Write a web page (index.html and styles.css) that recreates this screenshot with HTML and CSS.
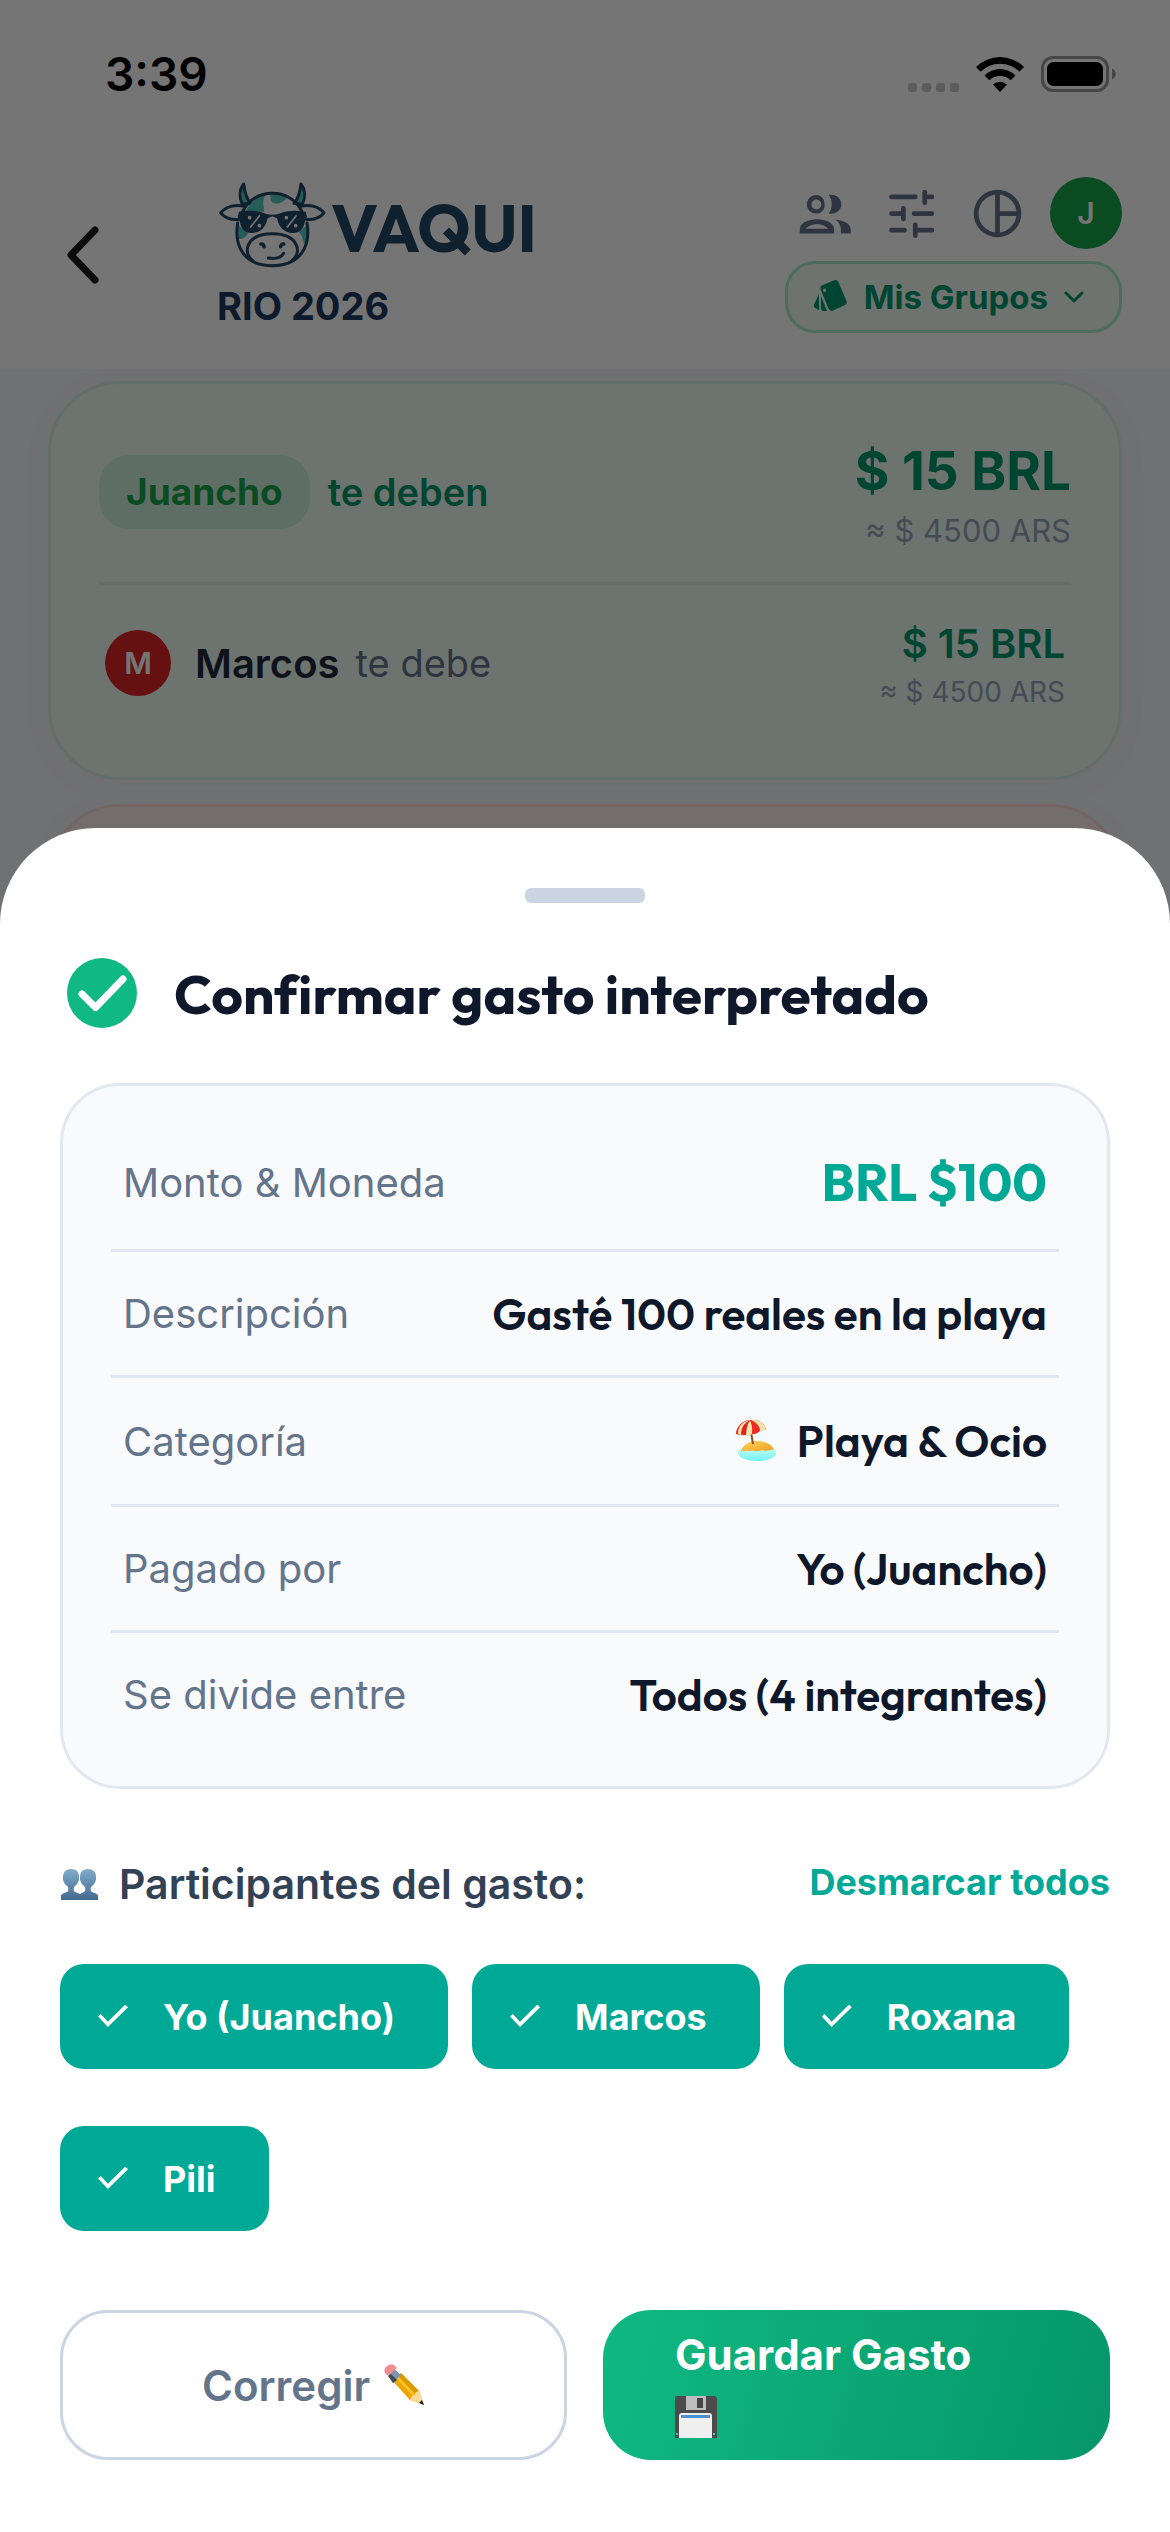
FILE: index.html
```html
<!DOCTYPE html>
<html lang="es">
<head>
<meta charset="utf-8">
<meta name="viewport" content="width=device-width, initial-scale=1">
<title>Vaqui – Confirmar gasto</title>
<link rel="stylesheet" href="styles.css">
</head>
<body>
<div class="screen">
  <div class="app">
    <div class="status">
      <span class="status-time">3:39</span>
      <div class="status-icons">
        <svg width="51" height="9" viewBox="0 0 51 9" fill="#c9c9c9" aria-hidden="true"><rect width="9" height="9" rx="2.5"/><rect x="14" width="9" height="9" rx="2.5"/><rect x="28" width="9" height="9" rx="2.5"/><rect x="42" width="9" height="9" rx="2.5"/></svg>
        <svg width="48" height="36" viewBox="0 0 48 36" aria-hidden="true"><path d="M0 11a34 34 0 0 1 48 0l-4.600 4.700a27.500 27.500 0 0 0-38.800 0z"/><path d="M8.500 19.500a22 22 0 0 1 31 0l-4.800 4.800a15.200 15.200 0 0 0-21.400 0z"/><path d="M17 28.500a10 10 0 0 1 14 0L24 36z"/></svg>
        <svg width="75" height="36" viewBox="0 0 75 36" aria-hidden="true"><rect x="1.500" y="1.500" width="65" height="33" rx="10.500" fill="none" stroke="#999" stroke-width="3"/><rect x="6" y="6" width="56" height="24" rx="6.500"/><path d="M71 12.500c5 2 5 9 0 11z" fill="#999"/></svg>
      </div>
    </div>

    <header class="header">
      <button class="back" aria-label="Volver"><svg width="34" height="58" viewBox="0 0 34 58" fill="none" stroke="#181c18" stroke-width="7" stroke-linecap="round" stroke-linejoin="round"><path d="M29 4 5 29l24 25"/></svg></button>
      <div class="brand">
        <div class="logo">
          <svg width="110" height="90" viewBox="54 47 330 270" fill="none" stroke="#214664" stroke-width="9" stroke-linecap="round" stroke-linejoin="round" role="img" aria-label="Vaca con anteojos">
            <path d="M155 117c-12-12-18-34-21-58-12 15-15 38-4 61z" fill="#53cac1"/>
            <path d="M285 117c12-12 18-34 21-58 12 15 15 38 4 61z" fill="#53cac1"/>
            <path d="M136 126c-28-8-57 2-71 20 14 16 34 22 57 19"/>
            <path d="M304 126c28-8 57 2 71 20-14 16-34 22-57 19"/>
            <path d="M140 140c18-30 34-44 60-48-14 24-4 34-4 50z" fill="#53cac1" stroke="none"/>
            <path d="M214 90c18-4 38 0 50 11-14 14-26 20-40 16-8-4-11-14-10-27z" fill="#53cac1" stroke="none"/>
            <path d="M116 178c8 14 26 20 32 28-6 10-14 20-32 18zM326 178c-8 12-22 18-26 28 12 2 8 26 20 36 8-20 10-44 6-64z" fill="#53cac1" stroke="none"/>
            <path d="M131 142c16-34 48-55 89-55s73 21 89 55M116 176c-12 72 22 128 104 128s116-56 104-128"/>
            <path d="M160 288c-28-20-22-80 60-80s88 60 60 80"/>
            <path d="M120 142q48-8 80 6 20 6 40 0 32-14 80-6l4 16q-4 3-6 10-4 38-36 38-38 0-48-44l-14-6-14 6q-10 44-48 44-32 0-36-38-2-7-6-10z" fill="#214664" stroke="none"/>
            <g stroke="#fff" stroke-width="5"><path d="m155 188 26-33M265 188l26-33"/><circle cx="152" cy="160" r="3"/><circle cx="181" cy="184" r="3"/><circle cx="262" cy="160" r="3"/><circle cx="290" cy="184" r="3"/></g>
            <path d="M186 239q8-1 9 8M254 239q-8-1-9 8" stroke-width="11"/>
            <path d="M208 281q34 6 46-14"/>
          </svg>
          <span class="logo-name">VAQUI</span>
        </div>
        <h1 class="group-name">RIO 2026</h1>
      </div>
      <div class="tools">
        <div class="tool-row">
          <button class="tool" aria-label="Miembros"><svg width="57" height="57" viewBox="0 0 24 24" fill="#64748b"><path d="M9 12c1.930 0 3.500-1.570 3.500-3.500C12.500 6 11.200 4.200 9 4.200S5 5.900 5 8.200 6.800 12 9 12zm0-5.900a2.100 2.100 0 1 1 0 4.200 2.100 2.100 0 0 1 0-4.200zM2 18.700v1.700h14.500v-1.700c0-2.900-3.800-4.300-7.250-4.300S2 15.800 2 18.700zm2.500-.3c.8-1 2.800-1.900 4.750-1.900s3.950.9 4.750 1.900zM14.200 12c3.100.5 5.300-1.400 5.300-3.900s-2.200-4.400-5.300-3.900c1.700 2.200 1.700 5.600 0 7.800zM17 14.500c1.700 1.200 2.300 2.600 2.300 4.200v1.700h4.200v-1.700c0-2.400-3-3.800-6.500-4.200z"/></svg></button>
          <button class="tool" aria-label="Ajustes"><svg width="57" height="57" viewBox="0 0 24 24" fill="none" stroke="#64748b" stroke-width="2" stroke-linecap="round"><path d="M4 5h10M18 5h3M18 3v4.500M4 12h4M9 9.800v4.500M13.500 12H21M4 19h5.500M14 16.800v4.500M14 19h7"/></svg></button>
          <button class="tool" aria-label="Estadísticas"><svg width="57" height="57" viewBox="0 0 24 24" fill="none" stroke="#64748b" stroke-width="2"><circle cx="12" cy="12" r="9"/><path d="M12 3v18M12 12h9"/></svg></button>
          <button class="avatar avatar-user" aria-label="Perfil">J</button>
        </div>
        <button class="groups">
          <svg width="36" height="36" viewBox="0 0 36 36" fill="#00976b" aria-hidden="true"><path fill-rule="evenodd" d="M11 6 22 1.300q3-1 4.500 2L34.500 22q1 3-2 4.300L21 31.500q-3 1-4.500-2L8.500 10q-1-3 2.500-4zm1.500 3.500a1.700 1.700 0 1 0 .1 0z"/><path d="M7 15v16l-3-1.500q-3-1.500-2-4zM9 17l6 15h-3q-3 0-3-3z"/></svg>
          <span>Mis Grupos</span>
          <svg width="20" height="12" viewBox="0 0 20 12" fill="none" stroke="#00976b" stroke-width="3" stroke-linecap="round" stroke-linejoin="round" aria-hidden="true"><path d="m2 2 8 8 8-8"/></svg>
        </button>
      </div>
    </header>

    <main class="balances">
      <section class="balance balance-credit">
        <div class="balance-total">
          <span class="name-pill">Juancho</span>
          <span class="owed">te deben</span>
          <div class="amounts"><strong class="amount-big">$ 15 BRL</strong><span class="approx">≈ $ 4500 ARS</span></div>
        </div>
        <div class="balance-person">
          <span class="avatar avatar-person">M</span>
          <span class="person-name">Marcos</span>
          <span class="person-note">te debe</span>
          <div class="amounts"><strong class="amount">$ 15 BRL</strong><span class="approx approx-small">≈ $ 4500 ARS</span></div>
        </div>
      </section>
      <section class="balance balance-debt"></section>
    </main>
  </div>

  <div class="scrim">
    <section class="sheet" role="dialog" aria-labelledby="sheet-title">
      <div class="handle"></div>
      <div class="sheet-head">
        <svg width="84" height="84" viewBox="0 0 84 84" aria-hidden="true"><circle cx="42" cy="42" r="35" fill="#10b981"/><path d="M22 43l13.500 13.500L63 28" fill="none" stroke="#fff" stroke-width="7" stroke-linecap="round" stroke-linejoin="round"/></svg>
        <h2 id="sheet-title" class="sheet-title">Confirmar gasto interpretado</h2>
      </div>

      <dl class="details">
        <div class="detail"><dt>Monto &amp; Moneda</dt><dd class="total">BRL $100</dd></div>
        <div class="detail"><dt>Descripción</dt><dd>Gasté 100 reales en la playa</dd></div>
        <div class="detail"><dt>Categoría</dt><dd class="category">
          <svg width="42" height="42" viewBox="0 0 42 42" aria-hidden="true">
            <defs>
              <linearGradient id="sea" x1="0" y1="0" x2="0" y2="1"><stop offset="0" stop-color="#d8fff8"/><stop offset="1" stop-color="#6ff1f5"/></linearGradient>
              <linearGradient id="sand" x1="0" y1="0" x2="1" y2="1"><stop offset="0" stop-color="#ffd95a"/><stop offset="1" stop-color="#ee9a22"/></linearGradient>
            </defs>
            <ellipse cx="22" cy="33" rx="19" ry="8" fill="url(#sea)"/>
            <path d="M6 31c3-8 10-10 16-10s15 2 17 9c-5-1-7 2-12 0-6 3-8-1-12 1-4-1-6 1-9 0z" fill="url(#sand)"/>
            <path d="m16 12 2 12" stroke="#8b4d20" stroke-width="2"/>
            <path d="M1 14C2 5 8 1 15 0c8-1 14 3 16 9q-3 2-6 1-2 4-8 4-2 2-6 1-4 1-10-1z" fill="#e9201d"/>
            <path d="M15 0C8 3 5 8 5 14q3 1 6 1 0-10 4-15zM15 0c6 2 9 6 10 10q3 1 6-1C29 3 23-1 15 0z" fill="#f5e2a5"/>
            <path d="M15 0c-3 5-4 10-4 15q4 1 6-1c1-5 0-10-2-14z" fill="#f7e4ae"/>
            <path d="M15 0C8 3 5 8 5 14l-4 0C2 5 8 1 15 0zM15 0c2 4 3 9 2 14q6 0 8-4C24 6 21 2 15 0z" fill="#f02a22"/>
            <path d="M15 0C8 3 5 8 5 14q3 1 6 1 0-10 4-15z" fill="#e3201b"/>
            <path d="M15 0C6 2 3 7 3 14l3 1C6 8 9 3 15 0z" fill="#f5e2a5"/>
          </svg>Playa &amp; Ocio</dd></div>
        <div class="detail"><dt>Pagado por</dt><dd>Yo (Juancho)</dd></div>
        <div class="detail"><dt>Se divide entre</dt><dd>Todos (4 integrantes)</dd></div>
      </dl>

      <div class="people-head">
        <h3 class="people-title">
          <svg width="39" height="33" viewBox="0 0 39 33" aria-hidden="true">
            <defs><linearGradient id="bust" x1="0" y1="0" x2="0" y2="1"><stop offset="0" stop-color="#7fadcc"/><stop offset="1" stop-color="#446892"/></linearGradient></defs>
            <path d="M1 32v-5q2-2 6-3 2-1 1-5-4-3-5-7-1-11 8-11t8 11q-1 4-5 7-1 4 1 5 4 1 6 3v5z" fill="url(#bust)"/>
            <path d="M19 32v-5q2-2 5-3 2-1 1-5-4-3-5-7-1-11 8-11t8 11q-1 4-5 7-1 4 1 5 4 1 6 3v5z" fill="url(#bust)"/>
          </svg>Participantes del gasto:</h3>
        <button class="link-button">Desmarcar todos</button>
      </div>

      <div class="chips">
        <label class="chip"><input type="checkbox" class="tick" checked>Yo (Juancho)</label>
        <label class="chip"><input type="checkbox" class="tick" checked>Marcos</label>
        <label class="chip"><input type="checkbox" class="tick" checked>Roxana</label>
        <label class="chip"><input type="checkbox" class="tick" checked>Pili</label>
      </div>

      <div class="actions">
        <button class="action action-edit">Corregir
          <svg width="42" height="42" viewBox="0 0 42 42" aria-hidden="true"><path d="m10 17 8-8 18 18 5 14-14-5z" fill="#ffc619"/><path d="m15 12 3-3 18 18 1 4-3 1z" fill="#d99a06"/><path d="m10 17 3-3 18 19-4 3z" fill="#eaa70b"/><path d="m27 36 2-4 3-1 1-3 3-1 5 14z" fill="#f8d99a"/><path d="m36 39 3-3 2 5z" fill="#222"/><path d="m5 11 6-6 7 6-8 8z" fill="#7f93b3"/><path d="m5 12 3-2 6 6-4 3z" fill="#444a55"/><path d="M2 9q-2-4 2-7t7-1l3 3-9 8z" fill="#f08d92"/></svg>
        </button>
        <button class="action action-save">Guardar Gasto
          <svg width="42" height="42" viewBox="0 0 42 42" aria-hidden="true"><path d="M0 2q0-2 2-2h38l2 2v40H0z" fill="#4b4b4b"/><path d="M11 0h20v14H11z" fill="#bdbdbd"/><path d="M22 2h6v10h-6z" fill="#444"/><path d="M4 20q0-3 3-3h27q3 0 3 3v22H4z" fill="#efefef"/><path d="M6 19h29v3H6z" fill="#4c91d6"/><path d="M1 37h2v2H1zM38 37h2v2h-2z" fill="#4ec7a5"/></svg>
        </button>
      </div>
    </section>
  </div>
</div>
</body>
</html>
```
FILE: styles.css
```css
*,
*::before {
  box-sizing: border-box;
}

body {
  margin: 0;
  font-family: Inter, "Noto Sans", sans-serif;
  color: #1e293b;
}

h1, h2, h3, dl, dd {
  margin: 0;
}

button {
  padding: 0;
  border: 0;
  background: none;
  color: inherit;
  font: inherit;
  cursor: pointer;
}

svg {
  display: block;
  flex: none;
}

/* The app and the modal layer share one grid cell */
.screen {
  display: grid;
  grid-template: minmax(100vh, auto) / minmax(0, 1fr);
}

.app,
.scrim {
  grid-area: 1 / 1;
}

.app {
  background: #f4f6fa;
}

/* Status bar */
.status {
  display: flex;
  justify-content: space-between;
  align-items: center;
  height: 141px;
  padding: 6px 54px 0 105px;
  background: #fff;
  color: #000;
}

.status-time {
  font-size: 46px;
  font-weight: 600;
}

.status-icons {
  display: flex;
  align-items: flex-end;
  gap: 17px;
}

/* Header */
.header {
  display: flex;
  align-items: center;
  padding: 36px 48px;
  background: #fff;
}

.back {
  width: 70px;
  padding-left: 18px;
}

.brand {
  margin-left: 99px;
}

.logo {
  display: flex;
  align-items: center;
  gap: 4px;
}

.logo-name {
  padding-top: 6px;
  color: #214664;
  font-family: Outfit, Inter, sans-serif;
  font-size: 66px;
  font-weight: 700;
  line-height: 84px;
}

.group-name {
  margin-top: 12px;
  color: #1e3a5f;
  font-size: 38px;
  font-weight: 700;
  line-height: 48px;
}

.tools {
  display: flex;
  flex-direction: column;
  align-items: flex-end;
  gap: 12px;
  margin-left: auto;
}

.tool-row {
  display: flex;
  align-items: center;
  gap: 30px;
}

.avatar {
  display: grid;
  place-items: center;
  flex: none;
  border-radius: 50%;
  color: #fff;
  font-size: 30px;
  font-weight: 600;
}

.avatar-user {
  width: 72px;
  height: 72px;
  margin-left: -6px;
  background: #16a34a;
}

.groups {
  display: flex;
  align-items: center;
  gap: 16px;
  height: 72px;
  padding: 0 35px 0 24px;
  border: 3px solid #a7ecd0;
  border-radius: 30px;
  background: #effaf5;
  color: #00976b;
  font-size: 33px;
  font-weight: 700;
}

/* Balance cards */
.balances {
  display: grid;
  gap: 24px;
  padding: 12px 48px;
}

.balance {
  padding: 48px;
  border: 3px solid;
  border-radius: 72px;
  box-shadow: 0 6px 36px rgba(15, 23, 42, 0.03);
}

.balance-credit {
  border-color: #d9f0e4;
  background: #eefaf0;
}

.balance-debt {
  min-height: 240px;
  border-color: #fcdcdc;
  background: #fceeee;
}

.balance-total {
  display: flex;
  align-items: center;
  height: 153px;
  padding-bottom: 30px;
  border-bottom: 3px solid #d9f0e4;
}

.name-pill {
  padding: 0 27px;
  border-radius: 30px;
  background: #d0f0dc;
  color: #16a34a;
  font-size: 37px;
  font-weight: 700;
  line-height: 74px;
}

.owed {
  margin-left: 18px;
  color: #00976b;
  font-size: 38px;
  font-weight: 600;
}

.amounts {
  display: grid;
  justify-items: end;
  margin-left: auto;
  padding-top: 12px;
}

.amount-big,
.amount {
  color: #00976b;
}

.amount-big {
  font-size: 53px;
  font-weight: 700;
  line-height: 66px;
}

.approx {
  color: #94a3b8;
  font-size: 31px;
  line-height: 54px;
}

.balance-person {
  display: flex;
  align-items: center;
  height: 144px;
  padding: 12px 6px 0;
}

.balance-person .amounts {
  padding-top: 9px;
}

.avatar-person {
  width: 66px;
  height: 66px;
  background: #dc2626;
}

.person-name {
  margin-left: 24px;
  font-size: 40px;
  font-weight: 600;
}

.person-note {
  margin-left: 16px;
  color: #64748b;
  font-size: 38px;
}

.amount {
  font-size: 40px;
  font-weight: 600;
  line-height: 48px;
}

.approx-small {
  font-size: 28px;
  line-height: 48px;
}

/* Bottom sheet */
.scrim {
  display: flex;
  align-items: flex-end;
  background: rgba(0, 0, 0, 0.54);
}

.sheet {
  flex: 1;
  min-width: 0;
  padding: 60px 60px 72px;
  border-radius: 96px 96px 0 0;
  background: #fff;
}

.handle {
  width: 120px;
  height: 15px;
  margin: 0 auto 48px;
  border-radius: 6px;
  background: #cbd5e1;
}

.sheet-head {
  display: flex;
  align-items: center;
  gap: 30px;
}

.sheet-title {
  padding-top: 2px;
  color: #0f172a;
  font-family: Outfit, Lato, sans-serif;
  font-size: 55px;
  font-variant-ligatures: none;
  font-weight: 700;
  line-height: 82px;
}

.details {
  margin-top: 48px;
  padding: 30px 48px;
  border: 3px solid #e2e8f0;
  border-radius: 60px;
  background: #f8fafc;
}

.detail {
  display: flex;
  justify-content: space-between;
  align-items: center;
  gap: 24px;
  padding: 36px 12px;
  border-bottom: 3px solid #e2e8f0;
  line-height: 51px;
}

.detail:last-child {
  border-bottom: 0;
}

.detail dt {
  color: #64748b;
  font-size: 40px;
}

.detail dd {
  color: #0f172a;
  font-family: Outfit, Lato, sans-serif;
  font-size: 44px;
  font-weight: 600;
  text-align: right;
}

.detail .total {
  color: #00a896;
  font-size: 52px;
  font-weight: 700;
  line-height: 61px;
}

.detail .category {
  display: flex;
  align-items: center;
  gap: 20px;
  line-height: 54px;
}

.people-head {
  display: flex;
  justify-content: space-between;
  align-items: center;
  margin-top: 68px;
}

.people-title {
  display: flex;
  align-items: center;
  gap: 20px;
  color: #334155;
  font-size: 41px;
  font-weight: 600;
  line-height: 54px;
}

.link-button {
  padding-bottom: 4px;
  color: #00a896;
  font-size: 36px;
  font-weight: 700;
}

.chips {
  display: flex;
  flex-wrap: wrap;
  gap: 57px 24px;
  margin-top: 53px;
}

.chip {
  display: flex;
  align-items: center;
  height: 105px;
  padding: 0 53px 0 38px;
  border-radius: 24px;
  background: #00a896;
  color: #fff;
  font-size: 36px;
  font-weight: 700;
}

.tick {
  appearance: none;
  width: 30px;
  height: 24px;
  margin: 0 35px 0 0;
}

.tick:checked::before {
  content: "";
  display: block;
  width: 30px;
  height: 24px;
  background: #fff;
  clip-path: polygon(0 50%, 9% 40%, 33% 72%, 91% 0, 100% 11%, 33% 94%);
}

.actions {
  display: grid;
  grid-template-columns: 1fr 1fr;
  gap: 36px;
  margin-top: 79px;
}

.action {
  display: flex;
  align-items: center;
  justify-content: center;
  gap: 13px;
  height: 150px;
  border-radius: 48px;
  font-size: 42px;
  font-weight: 700;
}

.action-edit {
  border: 3px solid #cbd5e1;
  color: #64748b;
  font-weight: 600;
}

.action-save {
  flex-direction: column;
  align-items: flex-start;
  gap: 16px;
  padding: 0 72px 4px;
  background: linear-gradient(107deg, #10b981, #059669);
  color: #fff;
}
```
